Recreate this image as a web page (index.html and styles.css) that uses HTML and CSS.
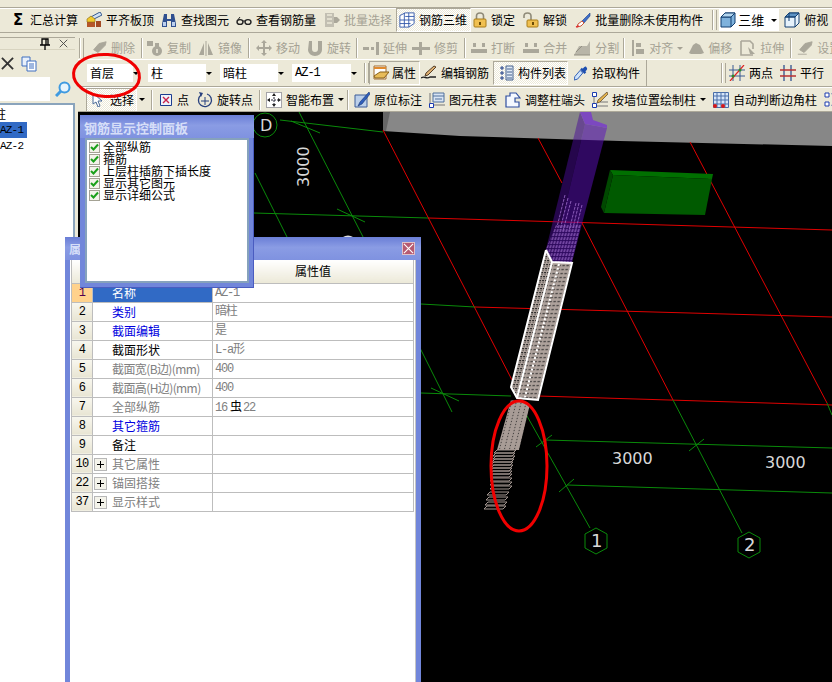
FILE: index.html
```html
<!DOCTYPE html>
<html lang="zh">
<head>
<meta charset="utf-8">
<title>钢筋三维</title>
<link rel="stylesheet" href="styles.css">
</head>
<body>
<svg class="sprite" aria-hidden="true">
  <defs>
    <symbol id="i-slab" viewBox="0 0 16 16"><path d="M3 6 14 0l2 3-12 6z" fill="#cfe0f4" stroke="#35598f"/><path d="M1 10h8v5H1z" fill="#b5562a"/><path d="M1 7l4-3 4 3v3H1z" fill="#f2c92e" stroke="#8a6a10" stroke-width=".6"/><path d="M10 9h5v6h-5z" fill="#a34a24"/></symbol>
    <symbol id="i-bino" viewBox="0 0 16 16"><path d="M3 2h3v5h4V2h3l2 10v3H10V9H6v6H1v-3z" fill="#2f4f8f"/><path d="M2 10h3v4H2zM11 10h3v4h-3z" fill="#bcd0ee"/></symbol>
    <symbol id="i-glass" viewBox="0 0 16 16"><ellipse cx="4" cy="10" rx="3" ry="2.4" fill="none" stroke="#222" stroke-width="1.4"/><ellipse cx="12" cy="10" rx="3" ry="2.4" fill="none" stroke="#222" stroke-width="1.4"/><path d="M7 9h2M1 9l3-4" stroke="#222"/></symbol>
    <symbol id="i-batch" viewBox="0 0 16 16"><path d="M1 1h9v14H1z" fill="#c2bfb2"/><path d="M3 3h5M3 7h5M3 11h5" stroke="#ece9d8" stroke-width="1.4"/><path d="M10 5h3l3 3-3 3h-3z" fill="#aaa79a"/></symbol>
    <symbol id="i-cage" viewBox="0 0 18 18"><path d="M1 4l6-3h10v12l-6 4H1z" fill="#fff" stroke="#2e55a8"/><path d="M6 1v16M11 1v16M1 9h16M1 13h12M7 5h10" stroke="#2e55a8" fill="none"/></symbol>
    <symbol id="i-lock" viewBox="0 0 14 16"><path d="M3.500 7V4a3.500 3 0 0 1 7 0v3" fill="none" stroke="#8f8a78" stroke-width="1.6"/><rect x="1" y="7" width="12" height="8" rx="1" fill="#f0c050" stroke="#a87c18"/><path d="M6 10h2v3H6z" fill="#6a4c08"/></symbol>
    <symbol id="i-unlock" viewBox="0 0 16 16"><path d="M1 6V4a3.500 3 0 0 1 7 0v4" fill="none" stroke="#8f8a78" stroke-width="1.6"/><rect x="4" y="8" width="11" height="7" rx="1" fill="#f0c050" stroke="#a87c18"/><path d="M9 10h2v3H9z" fill="#6a4c08"/></symbol>
    <symbol id="i-brush" viewBox="0 0 16 16"><path d="M15 1 7 9l2 2 6-7z" fill="#3f6fc8" stroke="#1d3f88" stroke-width=".6"/><path d="M7 9l-4 3-1 3 4-1 3-3z" fill="#fff" stroke="#c8563c"/><path d="M1 15l3-1" stroke="#d33" stroke-width="1.5"/></symbol>
    <symbol id="i-cube" viewBox="0 0 16 16"><path d="M1 5l4-4h10v10l-4 4H1z" fill="#7fb2dc" stroke="#123f70"/><path d="M1 5h10v10M11 5l4-4" fill="none" stroke="#123f70"/><path d="M5 1h10l-4 4H1z" fill="#b4d6ee" stroke="#123f70"/></symbol>
    <symbol id="i-cube2" viewBox="0 0 16 16"><path d="M1 5l4-4h10v10l-4 4H1z" fill="#e6f2fb" stroke="#123f70"/><path d="M5 1h10l-4 4H1z" fill="#5d93c4" stroke="#123f70"/><path d="M1 5h10v10M11 5l4-4M5 1v8" fill="none" stroke="#123f70"/></symbol>
    <symbol id="d-erase" viewBox="0 0 18 16"><path d="M17 1 9 3 3 10l5 3 8-8z M1 15h10" fill="#aaa79a" stroke="#aaa79a"/></symbol>
    <symbol id="d-copy" viewBox="0 0 16 16"><path d="M0 1h6v5H0z M8 3h4v4H8z" fill="#aaa79a"/><circle cx="10" cy="11" r="5" fill="#aaa79a"/><path d="M10 9v4" stroke="#ece9d8" stroke-width="1.6"/></symbol>
    <symbol id="d-mirror" viewBox="0 0 16 16"><path d="M6 3v12H1zM10 3v12h5z" fill="#aaa79a"/><path d="M8 1v15" stroke="#aaa79a"/></symbol>
    <symbol id="d-move" viewBox="0 0 16 16"><path d="M8 0l3 3H9v4h4V5l3 3-3 3V9H9v4h2l-3 3-3-3h2V9H3v2L0 8l3-3v2h4V3H5z" fill="#aaa79a"/></symbol>
    <symbol id="d-rot" viewBox="0 0 16 16"><path d="M2 1h3v8a3 3 0 0 0 6 0V1h4v9a7 6 0 0 1-14 0z" fill="#aaa79a"/></symbol>
    <symbol id="d-ext" viewBox="0 0 16 16"><path d="M0 7h6v3H0zM8 7h3v3H8z" fill="#aaa79a"/><path d="M13 2h3v13h-3z" fill="#aaa79a"/></symbol>
    <symbol id="d-trim" viewBox="0 0 18 16"><path d="M0 7h7V2h3v5h8v3h-8v5H7v-5H0z" fill="#aaa79a"/></symbol>
    <symbol id="d-break" viewBox="0 0 16 16"><path d="M0 9h16v4H0z" fill="#aaa79a"/><path d="M2 3h3v4H2zM11 3h3v4h-3z" fill="#aaa79a"/></symbol>
    <symbol id="d-split" viewBox="0 0 18 16"><path d="M1 15 6 6h8l3-5v14z" fill="#b8b5a8"/><path d="M1 15h16M3 12l6-6" stroke="#928f82"/></symbol>
    <symbol id="d-align" viewBox="0 0 14 16"><path d="M1 0h2v16H1z M5 3h5v4H5z M5 9h8v5H5z" fill="#aaa79a"/></symbol>
    <symbol id="d-off" viewBox="0 0 16 16"><path d="M1 13 5 5l3-2 4 2 4 8-3 1H3z" fill="#aaa79a"/></symbol>
    <symbol id="d-str" viewBox="0 0 16 16"><path d="M1 1h9l3 3v5M13 15H1V1" fill="none" stroke="#aaa79a" stroke-width="1.6"/><path d="M8 7l7 7h-5z" fill="#aaa79a"/></symbol>
    <symbol id="i-prop" viewBox="0 0 16 16"><path d="M1 1h12v13H1z" fill="#fff" stroke="#a06c30"/><path d="M1 3h12" stroke="#e08a2c" stroke-width="2"/><path d="M1 11l6-4h9l-5 6H2z" fill="#e8bc58" stroke="#876018"/></symbol>
    <symbol id="i-edit" viewBox="0 0 16 16"><path d="M15 2 7 10l-3 1 1-3 8-7z" fill="#e0b070" stroke="#55402a"/><path d="M0 13c4-3 5 2 9-1h6" fill="none" stroke="#222" stroke-width="1.4"/></symbol>
    <symbol id="i-list" viewBox="0 0 14 16"><path d="M6 1h7v14H6z" fill="#dfe9f6" stroke="#44608c"/><path d="M7 4h5M7 7h5M7 10h5M7 13h5" stroke="#44608c"/><path d="M1 2h2v2H1zM1 7h2v2H1zM1 12h2v2H1z" fill="none" stroke="#1c3c88"/></symbol>
    <symbol id="i-pick" viewBox="0 0 16 16"><path d="M14 1c2 2 1 3-1 5l1 1-2 2-5-5 2-2 1 1c2-2 3-3 4-2z" fill="#1d4fb0"/><path d="M7 5 1 12l-1 4 4-1 6-7z" fill="#cfe3fa" stroke="#1d4fb0"/></symbol>
    <symbol id="i-two" viewBox="0 0 16 16"><path d="M4 0v16M11 0v16M0 5h16M0 11h16" stroke="#3a5a92" fill="none"/><path d="M15 0 1 16" stroke="#d22" stroke-width="1.2"/><circle cx="4" cy="11" r="1.500" fill="#2c8c2c"/><circle cx="11" cy="5" r="1.500" fill="#2c8c2c"/></symbol>
    <symbol id="i-par" viewBox="0 0 16 16"><path d="M4 0v16M11 0v16" stroke="#31518f" stroke-width="1.3"/><path d="M0 5h16M0 11h16" stroke="#b83030" stroke-width="1.3"/></symbol>
    <symbol id="i-arrow" viewBox="0 0 10 14"><path d="M1 0v11l3-2 2 5 2-1-2-5h4z" fill="#fff" stroke="#4a6a98"/></symbol>
    <symbol id="i-point" viewBox="0 0 12 12"><path d="M.5.5h11v11H.5z" fill="#eef3fb" stroke="#1c3c90"/><path d="M3 3l6 6M9 3l-6 6" stroke="#c9224a" stroke-width="1.4"/></symbol>
    <symbol id="i-rotp" viewBox="0 0 16 16"><path d="M4 3a6.500 6.500 0 1 0 6-1" fill="none" stroke="#27407e" stroke-width="1.3"/><path d="M2 0l4 1-2 4z" fill="#27407e"/><path d="M8 5v8M4 9h8" stroke="#27407e"/></symbol>
    <symbol id="i-smart" viewBox="0 0 16 16"><path d="M.5.5h15v15H.5z" fill="#fff" stroke="#556" stroke-dasharray="1 1"/><path d="M8 2v12M2 8h12" stroke="#223" stroke-dasharray="2 1"/><path d="M6 4h4L8 1zM6 12h4l-2 3zM4 6v4L1 8zM12 6v4l3-2z" fill="#222"/></symbol>
    <symbol id="i-note" viewBox="0 0 16 16"><path d="M1 3h12v12H1z" fill="#bcd0ea" stroke="#3c5c98"/><path d="M15 0 6 10l-2 4 4-2 8-10z" fill="#2f5fbc" stroke="#18346e" stroke-width=".6"/></symbol>
    <symbol id="i-table" viewBox="0 0 16 16"><path d="M4 1h11v9H4z" fill="#d8e4f4" stroke="#50709c"/><path d="M4 4h11M6 7h7" stroke="#50709c"/><path d="M4 13h12" stroke="#777"/><path d="M.5 11.500h4v4h-4z" fill="#fff" stroke="#1c3cb0"/><path d="M1 1v10" stroke="#777"/></symbol>
    <symbol id="i-adj" viewBox="0 0 16 16"><path d="M1 4h4V1h6l4 5h-5v4h4v5H1z" fill="#f4f8ff" stroke="#2f4f9f" stroke-width="1.2"/></symbol>
    <symbol id="i-wall" viewBox="0 0 16 16"><path d="M.5.5h4v4h-4zM.5 11.500h4v4h-4z" fill="#fff" stroke="#1c3cb0"/><path d="M2 5v6M5 14h11M8 10h8" stroke="#777"/><path d="M15 0l1 2-8 8-3 1 1-3z" fill="#e2b24c" stroke="#55402a" stroke-width=".7"/></symbol>
    <symbol id="i-auto" viewBox="0 0 16 16"><path d="M.5.5h15v15H.5z" fill="#d6e6fa" stroke="#4a6ea8"/><path d="M4 1v14M8 1v14M12 1v14M1 4h14M1 8h14M1 12h14" stroke="#4a6ea8"/><circle cx="2" cy="14" r="2" fill="#d81818"/><circle cx="10" cy="14" r="2" fill="#d81818"/></symbol>
    <symbol id="i-last" viewBox="0 0 16 16"><path d="M1 1h4v4H1zM1 10h4v4H1z" fill="#fff" stroke="#1c3cb0"/><path d="M8 1l6 6-6 7" fill="none" stroke="#2f4f9f" stroke-width="2"/></symbol>
    <symbol id="i-check" viewBox="0 0 9 9"><path d="M1 4l2.500 2.500L8 1.500" fill="none" stroke="#1aa01a" stroke-width="2"/></symbol>
    <symbol id="i-pin" viewBox="0 0 10 12"><path d="M2 1h6v6H2zM0 7h10M5 7v5M6 1v6" fill="none" stroke="#000" stroke-width="1.300"/></symbol>
    <symbol id="i-x" viewBox="0 0 12 12"><path d="M1 1l10 10M11 1 1 11" stroke="#444" stroke-width="1.200"/></symbol>
    <symbol id="i-xbig" viewBox="0 0 14 14"><path d="M1 1l12 12M13 1 1 13" stroke="#333" stroke-width="2"/></symbol>
    <symbol id="i-paste" viewBox="0 0 16 16"><path d="M1 1h8v9H1z" fill="#e8f0fb" stroke="#3f6fc0"/><path d="M6 5h9v10H6z" fill="#fff" stroke="#3f6fc0"/><path d="M8 8h5M8 10h5M8 12h5" stroke="#3f6fc0"/></symbol>
    <symbol id="i-search" viewBox="0 0 16 16"><circle cx="9.500" cy="6.500" r="5" fill="#e8f4fc" stroke="#3f9ae0" stroke-width="2"/><path d="M6 10l-5 5" stroke="#3f9ae0" stroke-width="3"/></symbol>
    <pattern id="mesh" width="3" height="4" patternUnits="userSpaceOnUse" patternTransform="skewX(-14)"><rect width="3" height="4" fill="#aea29c"/><path d="M0 .5h2M1.500 2v1" stroke="#222"/></pattern>
    <pattern id="mesh2" width="4" height="4" patternUnits="userSpaceOnUse" patternTransform="skewX(-14)"><rect width="4" height="4" fill="#aea29c"/><path d="M.5 1.500h2.500" stroke="#222"/></pattern>
    <pattern id="mesh3" width="5" height="3" patternUnits="userSpaceOnUse" patternTransform="skewX(-14)"><rect width="5" height="3" fill="#a89c96"/><path d="M1 1.500h1" stroke="#222"/></pattern>
    <pattern id="mesh4" width="3" height="4" patternUnits="userSpaceOnUse" patternTransform="skewX(-14)"><rect width="3" height="4" fill="#8a5ab8"/><path d="M0 .5h3M1.500 1v3" stroke="#2e0a60"/></pattern>
    <path id="stir" d="M0 0h19l-3 3H-3z" fill="none" stroke="#a2958f"/>
  </defs>
</svg>

<div class="app">
  <div class="menu-strip"></div>

  <div class="bar bar-main">
    <div class="tool"><span class="sigma">Σ</span><span>汇总计算</span></div>
    <div class="tool m7"><svg class="ic"><use href="#i-slab"/></svg><span>平齐板顶</span></div>
    <div class="tool m7"><svg class="ic"><use href="#i-bino"/></svg><span>查找图元</span></div>
    <div class="tool"><svg class="ic"><use href="#i-glass"/></svg><span>查看钢筋量</span></div>
    <div class="tool off m4"><svg class="ic"><use href="#i-batch"/></svg><span>批量选择</span></div>
    <div class="tool pressed m2"><svg class="ic"><use href="#i-cage"/></svg><span>钢筋三维</span></div>
    <div class="tool"><svg class="ic narrow"><use href="#i-lock"/></svg><span>锁定</span></div>
    <div class="tool m8"><svg class="ic"><use href="#i-unlock"/></svg><span>解锁</span></div>
    <div class="tool m10"><svg class="ic"><use href="#i-brush"/></svg><span>批量删除未使用构件</span></div>
    <div class="grip"></div>
    <div class="view-combo"><svg class="ic"><use href="#i-cube"/></svg><span>三维</span><i class="caret"></i></div>
    <div class="tool"><svg class="ic"><use href="#i-cube2"/></svg><span>俯视</span></div>
  </div>

  <div class="body">
    <aside class="side">
      <div class="side-head"><svg class="pin"><use href="#i-pin"/></svg><svg class="close"><use href="#i-x"/></svg></div>
      <div class="side-tools"><svg class="xbig"><use href="#i-xbig"/></svg><svg class="ic"><use href="#i-paste"/></svg></div>
      <div class="side-search"><div class="search-input"></div><svg class="ic"><use href="#i-search"/></svg></div>
      <ul class="side-list">
        <li class="clip">柱</li>
        <li class="sel">AZ-1</li>
        <li>AZ-2</li>
      </ul>
    </aside>

    <main class="work">
      <div class="bar bar-edit off">
        <div class="grip"></div>
        <div class="tool m6"><svg class="ic"><use href="#d-erase"/></svg><span>删除</span></div>
        <div class="sep"></div>
        <div class="tool m7 first"><svg class="ic"><use href="#d-copy"/></svg><span>复制</span></div>
        <div class="tool m6"><svg class="ic"><use href="#d-mirror"/></svg><span>镜像</span></div>
        <div class="sep"></div>
        <div class="tool m7 first2"><svg class="ic"><use href="#d-move"/></svg><span>移动</span></div>
        <div class="tool m5"><svg class="ic"><use href="#d-rot"/></svg><span>旋转</span></div>
        <div class="sep"></div>
        <div class="tool m5 first3"><svg class="ic"><use href="#d-ext"/></svg><span>延伸</span></div>
        <div class="tool m6"><svg class="ic wide"><use href="#d-trim"/></svg><span>修剪</span></div>
        <div class="sep"></div>
        <div class="tool first3"><svg class="ic"><use href="#d-break"/></svg><span>打断</span></div>
        <div class="tool m6"><svg class="ic"><use href="#d-break"/></svg><span>合并</span></div>
        <div class="tool m4"><svg class="ic wide"><use href="#d-split"/></svg><span>分割</span></div>
        <div class="sep"></div>
        <div class="tool m5 first2"><svg class="ic narrow"><use href="#d-align"/></svg><span>对齐</span><i class="caret"></i></div>
        <div class="tool"><svg class="ic"><use href="#d-off"/></svg><span>偏移</span></div>
        <div class="tool m6"><svg class="ic"><use href="#d-str"/></svg><span>拉伸</span></div>
        <div class="sep"></div>
        <div class="tool first3"><svg class="ic"><use href="#d-erase"/></svg><span>设置</span></div>
      </div>

      <div class="bar bar-combo">
        <div class="combo c1"><span>首层</span><i class="caret"></i></div>
        <div class="combo c2"><span>柱</span><i class="caret"></i></div>
        <div class="combo c2"><span>暗柱</span><i class="caret"></i></div>
        <div class="combo c3"><span class="latin">AZ-1</span><i class="caret"></i></div>
        <div class="grip"></div>
        <div class="tool pressed-soft"><svg class="ic"><use href="#i-prop"/></svg><span>属性</span></div>
        <div class="tool m4"><svg class="ic"><use href="#i-edit"/></svg><span>编辑钢筋</span></div>
        <div class="tool pressed list-btn m6"><svg class="ic narrow"><use href="#i-list"/></svg><span>构件列表</span></div>
        <div class="tool m5"><svg class="ic narrow"><use href="#i-pick"/></svg><span>拾取构件</span></div>
        <div class="bar-end"></div>
        <div class="grip"></div>
        <div class="tool m7"><svg class="ic"><use href="#i-two"/></svg><span>两点</span></div>
        <div class="tool"><svg class="ic"><use href="#i-par"/></svg><span>平行</span></div>
      </div>

      <div class="bar bar-draw">
        <div class="tool pressed select"><svg class="ic arrow"><use href="#i-arrow"/></svg><span>选择</span></div>
        <i class="caret solo"></i>
        <div class="sep"></div>
        <div class="tool point"><svg class="ic pt"><use href="#i-point"/></svg><span>点</span></div>
        <div class="tool m6"><svg class="ic"><use href="#i-rotp"/></svg><span>旋转点</span></div>
        <div class="sep"></div>
        <div class="tool m3 first3"><svg class="ic"><use href="#i-smart"/></svg><span>智能布置</span><i class="caret"></i></div>
        <div class="sep"></div>
        <div class="tool m7 first3"><svg class="ic"><use href="#i-note"/></svg><span>原位标注</span></div>
        <div class="tool"><svg class="ic"><use href="#i-table"/></svg><span>图元柱表</span></div>
        <div class="tool m7"><svg class="ic"><use href="#i-adj"/></svg><span>调整柱端头</span></div>
        <div class="tool m7"><svg class="ic"><use href="#i-wall"/></svg><span>按墙位置绘制柱</span><i class="caret"></i></div>
        <div class="tool m7"><svg class="ic"><use href="#i-auto"/></svg><span>自动判断边角柱</span></div>
        <svg class="ic"><use href="#i-last"/></svg>
      </div>

      <div class="scene">
        <svg class="scene-svg" viewBox="78 112 754 570">
          <polygon points="383,112 832,112 832,146 620,141 460,136 383,131" fill="#878787"/>
          <polygon points="383,112 390,112 386,131 383,131" fill="#666"/>

          <g fill="none" stroke="#e00000" stroke-width="1">
            <path d="M383 130 512 380"/>
            <path d="M538 138 562 183M582 223 673 400"/>
            <path d="M690 142 827 403"/>
            <path d="M428 218 530 221 832 230"/>
            <path d="M475 307 832 317"/>
            <path d="M538 396 832 405"/>
          </g>
          <g fill="none" stroke="#0a8a0a" stroke-width="1">
            <path d="M280 120 383 132"/>
            <path d="M254 213 428 218"/>
            <path d="M421 304 475 307"/>
            <path d="M421 393 511 396"/>
            <path d="M298 110 421 350 452 412"/>
            <path d="M255 173 287 237"/>
            <path d="M518 400 590 528"/>
            <path d="M673 400 742 533"/>
            <path d="M827 403 832 415"/>
            <path d="M545 440 832 448"/>
            <path d="M567 485 832 493"/>
            <path d="M291 121 320 133M337 209 365 222M431 388 459 401M536 447 552 435M559 492 574 479M689 451 704 439"/>
            <path d="M265 113a12 12 0 1 0 0 24a12 12 0 1 0 0-24zM596 528l11 6v14l-11 6-11-6v-14zM749 532l11 6v14l-11 6-11-6v-14z"/>
          </g>
          <path d="M343 238q5-3 10 0" fill="none" stroke="#ddd" stroke-width="2"/>
          <text class="dim" x="612" y="464">3000</text>
          <text class="dim" x="765" y="468">3000</text>
          <text class="dim" transform="translate(309 187) rotate(-90)">3000</text>
          <text class="dim" x="260" y="131">D</text>
          <text class="dim big" x="591" y="547">1</text>
          <text class="dim big" x="744" y="551">2</text>

          <polygon points="610,170 713,174 712,179 613,175" fill="#007000"/>
          <polygon points="613,175 712,179 705,215 604,213" fill="#005a00"/>
          <polygon points="610,170 613,175 604,213 601,207" fill="#004800"/>

          <polygon points="580,112 585,124 552,262 546,249" fill="#4a0c98" class="purple"/>
          <polygon points="585,124 607,128 572,262 552,262" fill="#5e10c0" class="purple"/>
          <polygon points="580,112 591,112 593,120 607,125 607,128 585,124" fill="#7c48c0"/>
          <polygon points="556,225 581,225 572,262 552,262 546,249" fill="url(#mesh4)" opacity=".75"/>
          <g stroke="#8a5ab8" stroke-width="1" stroke-dasharray="3 1" fill="none">
            <path d="M565 195 557 227M568 198 560 230M571 201 563 231M576 203 569 231M579 203 573 228M582 205 576 229"/>
          </g>
          <polygon points="546,250 552,262 572,263 567,265 552,265" fill="#c8a8e8"/>

          <polygon points="546,250 552,262 517,398 511,387" fill="url(#mesh)"/>
          <polygon points="552,262 572,263 538,400 517,398" fill="url(#mesh2)"/>
          <g fill="none" stroke="#fff" stroke-width="2">
            <path d="M546 250 511 387 517 398 538 400 572 263 552 262 546 250"/>
            <path d="M552 262 517 398"/>
            <path d="M559 264 525 397" stroke-dasharray="2 2"/>
          </g>

          <polygon points="511,400 530,404 519,450 497,450" fill="url(#mesh3)"/>
          <use href="#stir" x="497" y="450"/>
          <use href="#stir" x="496" y="453"/>
          <use href="#stir" x="496" y="456"/>
          <use href="#stir" x="495" y="459"/>
          <use href="#stir" x="494" y="462"/>
          <use href="#stir" x="494" y="465"/>
          <use href="#stir" x="493" y="468"/>
          <use href="#stir" x="493" y="471"/>
          <use href="#stir" x="493" y="474"/>
          <use href="#stir" x="493" y="478"/>
          <use href="#stir" x="493" y="482"/>
          <use href="#stir" x="493" y="486"/>
          <use href="#stir" x="490" y="492"/>
          <use href="#stir" x="489" y="497"/>
          <use href="#stir" x="488" y="502"/>
          <use href="#stir" x="487" y="506"/>
        </svg>
      </div>
    </main>
  </div>

  <section class="win win-prop">
    <header class="win-title prop-title"><span>属性编辑</span><b class="win-close"><svg><use href="#i-x"/></svg></b></header>
    <div class="win-body">
      <table class="grid">
        <thead>
          <tr><th class="num"></th><th class="name">属性名称</th><th class="val">属性值</th></tr>
        </thead>
        <tbody>
          <tr><td class="num cur">1</td><td class="name cur-name">名称</td><td class="val">AZ-1</td></tr>
          <tr><td class="num">2</td><td class="name link">类别</td><td class="val">暗柱</td></tr>
          <tr><td class="num">3</td><td class="name link">截面编辑</td><td class="val">是</td></tr>
          <tr><td class="num">4</td><td class="name">截面形状</td><td class="val">L-a形</td></tr>
          <tr><td class="num">5</td><td class="name dim-name tight">截面宽(B边)(mm)</td><td class="val">400</td></tr>
          <tr><td class="num">6</td><td class="name dim-name tight">截面高(H边)(mm)</td><td class="val">400</td></tr>
          <tr><td class="num">7</td><td class="name dim-name">全部纵筋</td><td class="val">16<span class="grade">虫</span>22</td></tr>
          <tr><td class="num">8</td><td class="name link">其它箍筋</td><td class="val"></td></tr>
          <tr><td class="num">9</td><td class="name">备注</td><td class="val"></td></tr>
          <tr><td class="num">10</td><td class="name dim-name group"><i class="plus"></i>其它属性</td><td class="val"></td></tr>
          <tr><td class="num">22</td><td class="name dim-name group"><i class="plus"></i>锚固搭接</td><td class="val"></td></tr>
          <tr><td class="num">37</td><td class="name dim-name group"><i class="plus"></i>显示样式</td><td class="val"></td></tr>
        </tbody>
      </table>
    </div>
  </section>

  <section class="win win-ctrl">
    <header class="win-title"><span>钢筋显示控制面板</span></header>
    <div class="ctrl-body">
      <label class="chk"><i class="box"><svg><use href="#i-check"/></svg></i>全部纵筋</label>
      <label class="chk"><i class="box"><svg><use href="#i-check"/></svg></i>箍筋</label>
      <label class="chk"><i class="box"><svg><use href="#i-check"/></svg></i>上层柱插筋下插长度</label>
      <label class="chk"><i class="box"><svg><use href="#i-check"/></svg></i>显示其它图元</label>
      <label class="chk"><i class="box"><svg><use href="#i-check"/></svg></i>显示详细公式</label>
    </div>
  </section>

  <svg class="marks" viewBox="0 0 832 682">
    <ellipse cx="106.500" cy="75.500" rx="33" ry="21" transform="rotate(4 106.500 75.500)"/>
    <ellipse cx="519" cy="466" rx="28" ry="65"/>
  </svg>
</div>
</body>
</html>
```
FILE: styles.css
```css
* { box-sizing: border-box; }
html, body { margin: 0; padding: 0; height: 100%; overflow: hidden; background: #fff; }
body { font: 12px/14px "Noto Sans CJK SC", "Liberation Sans", sans-serif; color: #000; }
.sprite { position: absolute; width: 0; height: 0; }

.app { position: relative; width: 832px; height: 682px; overflow: hidden; display: flex; flex-direction: column; background: #ece9d8; }
.menu-strip { height: 7px; flex: none; }

.bar { display: flex; align-items: center; flex: none; white-space: nowrap; overflow: hidden; background: #ece9d8; }
.bar-main { height: 26px; padding-left: 10px; border-top: 1px solid #aca899; border-bottom: 1px solid #aca899; box-shadow: inset 0 1px 0 #fff; }

.tool { display: flex; align-items: center; gap: 4px; margin-right: 8px; flex: none; }
.m2 { margin-right: 2px; }
.m3 { margin-right: 3px; }
.m4 { margin-right: 4px; }
.m5 { margin-right: 5px; }
.m6 { margin-right: 6px; }
.m7 { margin-right: 7px; }
.m8 { margin-right: 8px; }
.m10 { margin-right: 10px; }
.first { margin-left: 4px; }
.first2 { margin-left: 6px; }
.first3 { margin-left: 5px; }

.ic { width: 16px; height: 16px; flex: none; display: block; }
.ic.wide { width: 18px; }
.ic.narrow { width: 14px; }
.ic.arrow { width: 10px; height: 14px; margin-right: 8px; }
.ic.pt { width: 12px; height: 12px; margin-right: 1px; }
.sigma { width: 16px; text-align: center; font: bold 15px/16px "DejaVu Sans", sans-serif; }
.off span { color: #a5a294; }

.pressed { height: 24px; padding: 0 3px 0 2px; margin-left: 0; border: 1px solid; border-color: #aca899 #fff #fff #aca899; background: repeating-conic-gradient(#fff 0 25%, #ece9d8 0 50%) 0 0 / 2px 2px; }
.pressed.list-btn { padding: 0 1px 0 6px; }

.grip { width: 4px; height: 20px; flex: none; margin-right: 2px; border-left: 1px solid #fff; border-right: 1px solid #aca899; background: #ece9d8; box-shadow: -1px 0 0 #aca899; }
.sep { width: 2px; height: 20px; flex: none; border-left: 1px solid #aca899; border-right: 1px solid #fff; }
.caret { display: block; width: 0; height: 0; flex: none; border: 3px solid transparent; border-top: 3px solid #000; border-bottom: 0; }
.off .caret { border-top-color: #a5a294; }

.view-combo { width: 60px; height: 22px; flex: none; margin-right: 5px; padding-left: 1px; display: flex; align-items: center; gap: 2px; background: #fff; font-size: 13px; }
.view-combo .caret { margin-left: 5px; }

.body { flex: 1; min-height: 0; display: flex; margin-top: 2px; }

.side { width: 78px; flex: none; padding-top: 2px; display: flex; flex-direction: column; }
.side-head { height: 13px; flex: none; display: flex; align-items: center; justify-content: flex-end; gap: 9px; padding-right: 7px; border-bottom: 1px solid #d8d4c0; border-top: 1px solid #aca899; width: 75px; }
.pin { width: 10px; height: 12px; }
.close { width: 9px; height: 9px; }
.side-tools { height: 27px; flex: none; display: flex; align-items: center; gap: 7px; padding-left: 1px; }
.xbig { width: 13px; height: 13px; }
.side-search { height: 24px; flex: none; display: flex; align-items: center; gap: 5px; }
.search-input { width: 50px; height: 24px; background: #fff; }
.side-list { flex: 1; width: 75px; margin: 2px 0 0; padding: 1px 0 0; list-style: none; background: #fff; border-top: 2px solid #8aa4bc; border-right: 2px solid #8aa4bc; overflow: hidden; }
.side-list li { height: 16px; line-height: 16px; width: 27px; overflow: hidden; font: 11px/16px "Liberation Mono", monospace; letter-spacing: -.8px; }
.side-list li.clip { font: 12px/16px "Noto Sans CJK SC", sans-serif; letter-spacing: 0; text-indent: -6px; }
.side-list li.sel { background: #316ac5; color: #000; }

.work { flex: 1; min-width: 0; display: flex; flex-direction: column; }
.bar-edit { height: 24px; padding: 2px 0 0 2px; }
.bar-edit .grip { margin-right: 7px; }
.bar-combo { height: 28px; padding-left: 9px; border-top: 1px solid #fff; border-bottom: 1px solid #aca899; }
.bar-draw { height: 25px; padding-left: 8px; border-top: 1px solid #fff; border-bottom: 1px solid #aca899; }

.combo { height: 18px; flex: none; display: flex; align-items: center; justify-content: space-between; padding: 0 3px; margin-right: 5px; background: linear-gradient(90deg, #fff 0, #fff calc(100% - 9px), #ece9d8 calc(100% - 9px)); }
.c1 { width: 55px; margin-right: 6px; }
.c2 { width: 67px; }
.c3 { width: 68px; }
.latin { font-family: "Liberation Mono", monospace; letter-spacing: -1px; }
.pressed-soft { height: 24px; margin-right: 1px; padding: 0 3px; gap: 3px; border: 1px solid; border-color: #aca899 #fff #fff #aca899; background: #ece9d8; }
.bar-end { width: 2px; height: 27px; flex: none; margin-right: 75px; border-right: 1px solid #aca899; }
.bar-combo .grip { margin-right: 0; }
.bar-combo .bar-end + .grip { margin-right: 3px; }

.select { padding-left: 5px; width: 51px; margin-right: 2px; gap: 0; }
.solo { margin-right: 6px; }
.point { margin-left: 7px; gap: 4px; }

.scene { flex: 1; min-height: 0; position: relative; background: #000; overflow: hidden; }
.scene-svg { display: block; width: 754px; height: 570px; }
.purple { opacity: .5; }
.dim { font: 16px "DejaVu Sans", sans-serif; fill: #d8d8d8; }
.dim.big { font-size: 18px; }

.win { position: absolute; display: flex; flex-direction: column; }
.win-title { flex: none; display: flex; align-items: center; color: #d6def8; font-weight: 700; background: linear-gradient(180deg, #6a7ed6, #8a9ce4 45%, #7f92e0); }
.win-ctrl { left: 80px; top: 115px; width: 174px; height: 173px; padding: 0 5px 5px; background: #7186da; box-shadow: inset -1px -1px 0 #4a5cc0; }
.win-ctrl .win-title { height: 23px; margin: 0 -5px; padding: 2px 0 0 4px; font-size: 13px; }
.ctrl-body { flex: 1; padding: 1px 0 0 2px; background: #fff; border: 2px solid #86a2bc; }
.chk { display: flex; align-items: center; height: 12px; gap: 3px; line-height: 12px; white-space: nowrap; }
.box { width: 11px; height: 11px; flex: none; display: block; padding: 0; border: 1px solid #a4a294; background: #f3f3ea; }
.box svg { display: block; width: 9px; height: 9px; }

.win-prop { left: 65px; top: 237px; width: 356px; height: 460px; padding: 0 5px 5px; background: #7186da; }
.prop-title { height: 23px; margin: 0 -5px; padding: 0 6px 0 4px; justify-content: space-between; }
.win-close { width: 13px; height: 13px; display: block; background: #b65a72; border: 1px solid #e0c0c8; }
.win-close svg { display: block; width: 11px; height: 11px; filter: brightness(4); }
.win-body { flex: 1; padding: 0 0 0 1px; background: #fff; border-right: 1px solid #c4c4c4; }

.grid { table-layout: fixed; width: 342px; border-collapse: collapse; }
.grid th, .grid td { padding: 0; border: 1px solid #bdbdbd; height: 19px; line-height: 16px; font-weight: 400; overflow: hidden; white-space: nowrap; }
.grid thead th { height: 23px; background: linear-gradient(180deg, #fff, #ece9d8); border-top: 0; text-align: center; }
.grid th.num, .grid td.num { width: 21px; }
.grid th.name, .grid td.name { width: 120px; }
.grid th.val, .grid td.val { width: 201px; }
.grid td.num { text-align: center; font-family: "Liberation Mono", monospace; letter-spacing: -.6px; background: linear-gradient(180deg, #f8f7ef, #e8e5d3); }
.grid td.name { padding-left: 19px; }
.grid td.tight { letter-spacing: -.6px; }
.grid td.val { padding: 1px 0 0 2px; line-height: 14px; color: #808080; font-family: "Liberation Mono", "Noto Sans CJK SC", monospace; font-size: 12px; letter-spacing: -1.200px; }
.grid td.cur { background: #ffd28c; color: #500050; }
.grid td.cur-name { background: #316ac5; color: #fff; }
.grid td.link { color: #0000e0; }
.grid td.dim-name { color: #808080; }
.grid td.group { padding-left: 1px; }
.grade { color: #000; font-family: "Noto Sans CJK SC", sans-serif; font-size: 12px; line-height: 14px; letter-spacing: 0; margin: 0 1px 0 3px; }
.plus { display: inline-block; vertical-align: -2px; width: 13px; height: 13px; margin-right: 5px; border: 1px solid #b8b8b8; background: linear-gradient(#000, #000) center / 7px 1px no-repeat, linear-gradient(#000, #000) center / 1px 7px no-repeat, #f4f3ea; }

.marks { position: absolute; left: 0; top: 0; width: 832px; height: 682px; pointer-events: none; }
.marks ellipse { fill: none; stroke: #f00000; stroke-width: 3; }
```
